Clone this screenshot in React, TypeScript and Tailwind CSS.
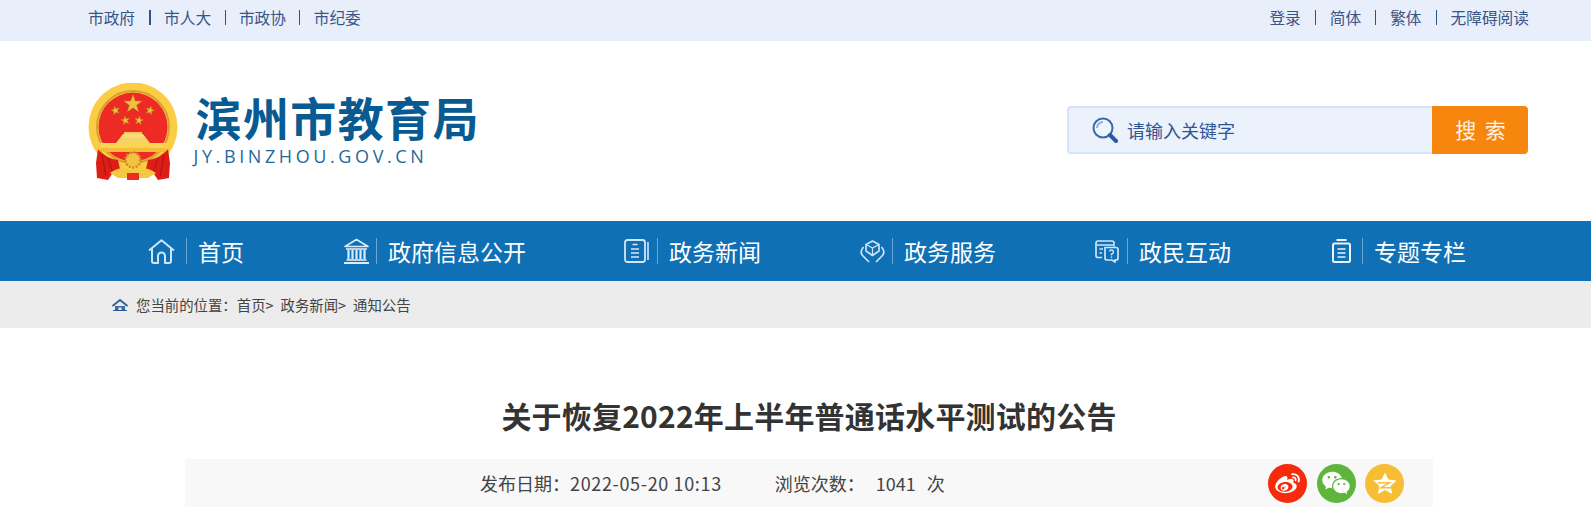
import React from "react";
import { RiWeiboFill, RiWechatFill } from "react-icons/ri";

const leftLinks = ["市政府", "市人大", "市政协", "市纪委"];
const rightLinks = ["登录", "简体", "繁体", "无障碍阅读"];

function Star({ cx, cy, r, rot = 0 }: { cx: number; cy: number; r: number; rot?: number }) {
  const pts: string[] = [];
  for (let i = 0; i < 10; i++) {
    const a = (-90 + rot + i * 36) * (Math.PI / 180);
    const rr = i % 2 === 0 ? r : r * 0.4;
    pts.push(`${(cx + rr * Math.cos(a)).toFixed(2)},${(cy + rr * Math.sin(a)).toFixed(2)}`);
  }
  return <polygon points={pts.join(" ")} fill="#f0c23c" stroke="#b98a2a" strokeWidth="0.5" />;
}

function Emblem() {
  return (
    <svg width="90" height="97" viewBox="0 0 90 97" className="shrink-0">
      <circle cx="45" cy="44" r="44.5" fill="#fbcd45" />
      <circle cx="45" cy="44" r="36" fill="none" stroke="#d9a030" strokeWidth="2" />
      <circle cx="45" cy="44" r="34.5" fill="#ee2a24" />
      <Star cx={45} cy={21} r={9.5} />
      <Star cx={27.5} cy={27.5} r={4.5} rot={-15} />
      <Star cx={62} cy={27.5} r={4.5} rot={15} />
      <Star cx={37.5} cy={37.5} r={4.5} rot={-10} />
      <Star cx={51} cy={37.5} r={4.5} rot={10} />
      <path d="M32 55 L58 55 L55 51 L35 51 Z" fill="#f9dc7a" />
      <rect x="36" y="49" width="18" height="2" fill="#f6cf5c" />
      <path d="M28 60 L62 60 L58 55 L32 55 Z" fill="#f7d366" />
      <rect x="12" y="60" width="66" height="5" fill="#fcd352" />
      <rect x="12" y="65" width="66" height="4" fill="#f5bd36" />
      <path d="M10 66 C15 72 22 76 30 77 L32 86 L24 91 L20 97 L9 95 L8 80 Z" fill="#dd1d16" />
      <path d="M80 66 C75 72 68 76 60 77 L58 86 L66 91 L70 97 L81 95 L82 80 Z" fill="#dd1d16" />
      <path d="M14 72 L18 93 M20 75 L25 90 M76 72 L72 93 M70 75 L65 90" stroke="#a91410" strokeWidth="1" fill="none" />
      <circle cx="45" cy="77" r="7.5" fill="#f4c343" stroke="#c98f26" strokeWidth="2.5" strokeDasharray="2 1.5" />
      <path d="M22 90 C30 84 38 84 45 87 C52 84 60 84 68 90 L60 95 L30 95 Z" fill="#f6c83f" />
      <rect x="39" y="90" width="12" height="7" fill="#ee2a24" />
    </svg>
  );
}

function SearchIcon() {
  return (
    <svg width="26" height="26" viewBox="0 0 26 26" fill="none" className="shrink-0">
      <circle cx="11" cy="11" r="9.5" stroke="#3c68a8" strokeWidth="2" fill="#eef4fc" />
      <path d="M5 11a6 6 0 0 1 6-6" stroke="#8fb0dc" strokeWidth="2" />
      <path d="M18 18 L24 24" stroke="#2a5a9f" strokeWidth="4" strokeLinecap="round" />
    </svg>
  );
}

function HomeIcon() {
  return (
    <svg width="27" height="25" viewBox="0 0 27 25" fill="none" stroke="#cfe6f7" strokeWidth="2" strokeLinejoin="round">
      <path d="M1 11.5 L13.5 1.2 L26 11.5" />
      <path d="M4 9.5 V22 A2 2 0 0 0 6 24 H10 V17 A3.5 3.5 0 0 1 17 17 V24 H21 A2 2 0 0 0 23 22 V9.5" />
    </svg>
  );
}

function BankIcon() {
  return (
    <svg width="27" height="26" viewBox="0 0 27 26" fill="none" stroke="#dcecf9" strokeWidth="1.6">
      <path d="M2 8.5 L13.5 1.5 L25 8.5 Z" strokeLinejoin="round" />
      <path d="M3 11 H24" />
      <path d="M5.5 12 V21 M9.5 12 V21 M13.5 12 V21 M17.5 12 V21 M21.5 12 V21" strokeWidth="2.2" />
      <path d="M3.5 22 H23.5" />
      <path d="M1 25 H26" strokeWidth="2" />
    </svg>
  );
}

function NewsIcon() {
  return (
    <svg width="25" height="24" viewBox="0 0 25 24" fill="none" stroke="#d3e7f7" strokeWidth="1.8">
      <rect x="1" y="1" width="20" height="22" rx="2.5" />
      <path d="M24 3 V21" strokeWidth="1.6" />
      <path d="M8.5 5.5 H13.5 M7 10 H15 M7 14 H15 M7 18 H15" strokeWidth="1.5" />
    </svg>
  );
}

function ServiceIcon() {
  return (
    <svg width="25" height="23" viewBox="0 0 25 23" fill="none" stroke="#cfe4f6" strokeWidth="1.7" strokeLinejoin="round">
      <path d="M12.5 1 L19 4.5 V11 L12.5 15.5 L6 11 V4.5 Z" />
      <path d="M6 4.5 L12.5 8 L19 4.5 M12.5 8 V15.5" strokeWidth="1.3" />
      <path d="M3.5 7 C0 11 1 14 3 16 L9 22" />
      <path d="M21.5 7 C25 11 24 14 22 16 L16 22" />
    </svg>
  );
}

function ChatIcon() {
  return (
    <svg width="24" height="23" viewBox="0 0 24 23" fill="none" stroke="#cfe4f6" strokeWidth="1.7">
      <path d="M7 17.5 H3 A2 2 0 0 1 1 15.5 V3 A2 2 0 0 1 3 1 H17 A2 2 0 0 1 19 3 V6.5" />
      <path d="M1.5 5 H18 M4.5 9 H8 M4.5 13 H7" strokeWidth="1.4" />
      <path d="M10 7.5 H21 A2 2 0 0 1 23 9.5 V18 A2 2 0 0 1 21 20 H20 V22 L17 20 H12 A2 2 0 0 1 10 18 Z" />
      <path d="M14.5 11.5 A2 2 0 1 1 16.5 14 V15.5 M16.5 16.5 V18" strokeWidth="1.4" />
    </svg>
  );
}

function ColumnIcon() {
  return (
    <svg width="19" height="24" viewBox="0 0 19 24" fill="none" stroke="#eaf4fc" strokeWidth="2">
      <path d="M4.5 1 H14.5" />
      <rect x="1" y="4.5" width="17" height="18.5" rx="1.5" />
      <path d="M5.5 10 H13.5 M5.5 14 H13.5 M5.5 18 H13.5" strokeWidth="1.7" />
    </svg>
  );
}

const navItems = [
  { label: "首页", icon: <HomeIcon />, box: "w-[39px] pl-[1px]", item: "mr-[1px]" },
  { label: "政府信息公开", icon: <BankIcon />, box: "w-[33px]", item: "" },
  { label: "政务新闻", icon: <NewsIcon />, box: "w-[33px]", item: "" },
  { label: "政务服务", icon: <ServiceIcon />, box: "w-[33px] pl-[1px]", item: "" },
  { label: "政民互动", icon: <ChatIcon />, box: "w-[33px] pl-[1px]", item: "" },
  { label: "专题专栏", icon: <ColumnIcon />, box: "w-[33px] pl-[3px]", item: "" },
];

function QzoneIcon() {
  return (
    <svg width="24" height="23" viewBox="0 0 24 23">
      <polygon points="12,0.5 15.3,7.6 23.5,8.5 17.6,14 19.2,22 12,18 4.8,22 6.4,14 0.5,8.5 8.7,7.6" fill="#fff" />
      <path d="M5 10.8 H16.5 L8 15.8 H19" fill="none" stroke="#f6bd35" strokeWidth="1.5" />
    </svg>
  );
}

export default function App() {
  return (
    <div className="min-h-[521px] bg-white font-['Noto_Sans_CJK_SC',sans-serif] overflow-hidden">
      <div className="flex h-[41px] items-start justify-between bg-[#e8effb] pl-[88px] pr-[62px] text-[15.7px] leading-[35px] text-[#3a5587]">
        <ul className="flex">
          {leftLinks.map((t, i) => (
            <li key={t} className="flex items-center">
              {i > 0 && (
                <span className={i === 1 ? "mx-[13.5px] h-[15px] w-[2px] bg-[#2f5288]" : "mx-[13.4px] h-[15px] w-px bg-[#2f5288]"} />
              )}
              {t}
            </li>
          ))}
        </ul>
        <ul className="flex">
          {rightLinks.map((t, i) => (
            <li key={t} className="flex items-center">
              {i > 0 && <span className="mx-[14px] h-[15px] w-px bg-[#2f5288]" />}
              {t}
            </li>
          ))}
        </ul>
      </div>

      <header className="flex h-[180px] items-center justify-between pl-[88px] pr-[63px]">
        <div className="flex items-center">
          <Emblem />
          <div className="ml-[15.5px] mb-[8px]">
            <div className="text-[46px] font-bold leading-[56px] tracking-[1.4px] text-[#085a92] pl-[2px]">滨州市教育局</div>
            <div className="mt-[2px] font-['Open_Sans',sans-serif] text-[18px] leading-[20px] tracking-[3.6px] text-[#1f6a9c]">JY.BINZHOU.GOV.CN</div>
          </div>
        </div>
        <div className="mb-[2px] flex h-[48px] w-[461px]">
          <div className="flex flex-1 items-center rounded-l-[4px] border-2 border-r-0 border-[#d5e4f8] bg-[#ebf2fb] pl-[23px]">
            <SearchIcon />
            <input
              readOnly
              placeholder="请输入关键字"
              className="ml-[9px] w-[200px] bg-transparent text-[18px] outline-none placeholder:text-[#2f5596]"
            />
          </div>
          <button className="w-[96px] rounded-r-[4px] bg-[#f7860f] pl-[3px] text-[21px] tracking-[2px] text-[#fff3e4]">搜 索</button>
        </div>
      </header>

      <nav className="flex h-[60px] items-center gap-[98px] bg-[#0f70b5] pl-[147px] text-[23px] text-white">
        {navItems.map((n) => (
          <a key={n.label} className={`flex items-center ${n.item}`}>
            <span className={`${n.box} flex h-[28px] items-center`}>{n.icon}</span>
            <span className="mr-[11px] h-[26px] w-px bg-[#6ba6d2]" />
            {n.label}
          </a>
        ))}
      </nav>

      <div className="flex h-[47px] items-center bg-[#ececec] pl-[112px] text-[14.4px] text-[#444]">
        <svg width="16" height="12" viewBox="0 0 16 12" className="mr-[8px]" fill="none">
          <path d="M0.5 7 L8 1 L15.5 7" stroke="#2f5a94" strokeWidth="1.8" />
          <path d="M3 7 H13 V11 H9.5 V8.5 H6.5 V11 H3 Z" fill="#3f6ba3" />
          <path d="M1 11.5 H15" stroke="#2f5a94" />
        </svg>
        <div className="flex gap-[7px]">
          <span>您当前的位置：首页&gt;</span>
          <span>政务新闻&gt;</span>
          <span>通知公告</span>
        </div>
      </div>

      <main className="pl-[185px] pr-[158px] pt-[65px]">
        <h1 className="text-center text-[30px] font-bold leading-[44px] tracking-[0.2px] text-[#333]">
          关于恢复2022年上半年普通话水平测试的公告
        </h1>
        <div className="mt-[22px] flex h-[48px] items-center bg-[#f8f8f8] pl-[295px] pr-[29px] text-[18px] text-[#444]">
          <span>
            发布日期：<span className="tracking-[0.65px]">2022-05-20 10:13</span>
          </span>
          <span className="ml-[53px]">浏览次数：</span>
          <span className="ml-[11px]">1041</span>
          <span className="ml-[11px]">次</span>
          <div className="ml-auto flex gap-[9.5px]">
            <span className="flex h-[39px] w-[39px] items-center justify-center rounded-full bg-[#f62b0b] text-[27px] text-white">
              <RiWeiboFill />
            </span>
            <span className="flex h-[39px] w-[39px] items-center justify-center rounded-full bg-[#5eb53c] text-[30px] text-white">
              <RiWechatFill />
            </span>
            <span className="flex h-[39px] w-[39px] items-center justify-center rounded-full bg-[#f6bd35]">
              <QzoneIcon />
            </span>
          </div>
        </div>
      </main>
    </div>
  );
}
